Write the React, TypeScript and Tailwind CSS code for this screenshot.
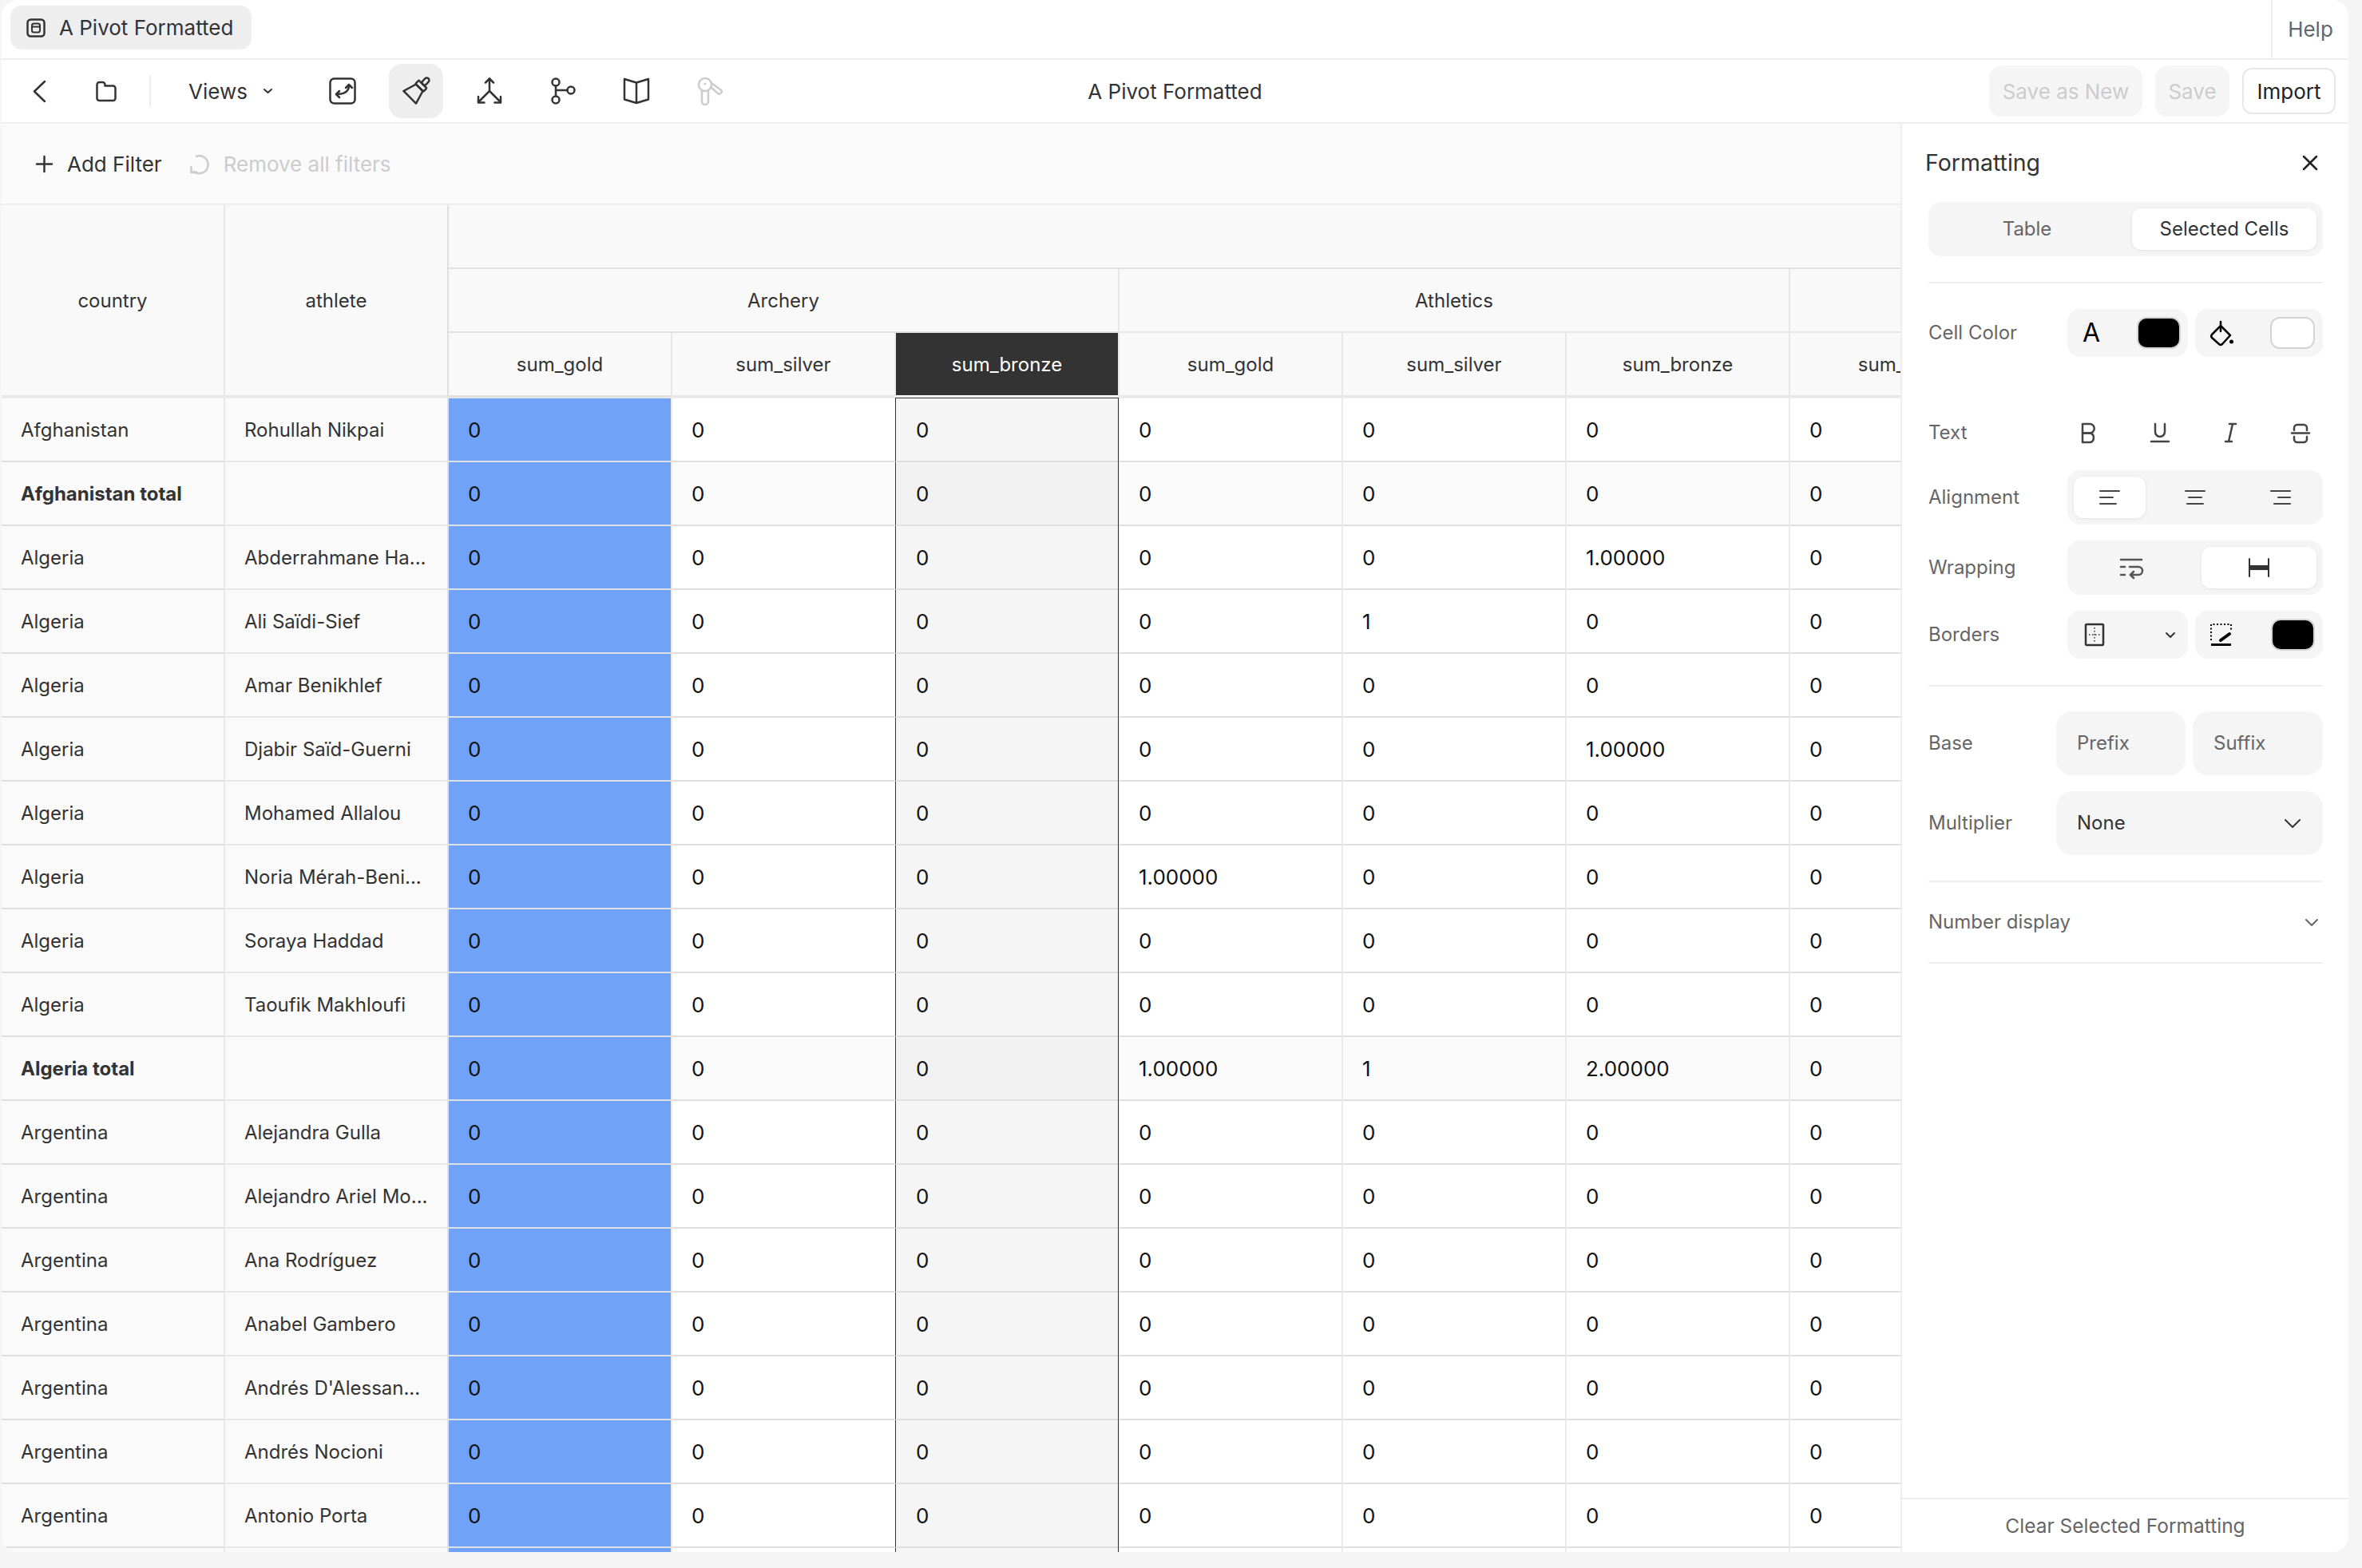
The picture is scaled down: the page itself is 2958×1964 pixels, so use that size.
import React from 'react';

type IconProps = { w: number; h: number; box?: string; sw?: number; className?: string; children: React.ReactNode };

const Ico = ({ w, h, box, sw = 2.5, className = '', children }: IconProps) => (
  <svg
    width={w}
    height={h}
    viewBox={box ?? `0 0 ${w} ${h}`}
    fill="none"
    stroke="currentColor"
    strokeWidth={sw}
    strokeLinecap="round"
    strokeLinejoin="round"
    className={`shrink-0 overflow-visible ${className}`}
  >
    {children}
  </svg>
);

const Chevron = ({ w = 16, h = 9, sw = 2 }: { w?: number; h?: number; sw?: number }) => (
  <Ico w={w} h={h} sw={sw}>
    <path d={`M1 1 L${w / 2} ${h - 1} L${w - 1} 1`} />
  </Ico>
);

const COLS = ['sum_gold', 'sum_silver', 'sum_bronze', 'sum_gold', 'sum_silver', 'sum_bronze', 'sum_gold'];

type Row = { country: string; athlete: string; total?: boolean; blank?: boolean; vals?: Record<number, string> };

const ROWS: Row[] = [
  { country: 'Afghanistan', athlete: 'Rohullah Nikpai' },
  { country: 'Afghanistan total', athlete: '', total: true },
  { country: 'Algeria', athlete: 'Abderrahmane Ha...', vals: { 5: '1.00000' } },
  { country: 'Algeria', athlete: 'Ali Saïdi-Sief', vals: { 4: '1' } },
  { country: 'Algeria', athlete: 'Amar Benikhlef' },
  { country: 'Algeria', athlete: 'Djabir Saïd-Guerni', vals: { 5: '1.00000' } },
  { country: 'Algeria', athlete: 'Mohamed Allalou' },
  { country: 'Algeria', athlete: 'Noria Mérah-Beni...', vals: { 3: '1.00000' } },
  { country: 'Algeria', athlete: 'Soraya Haddad' },
  { country: 'Algeria', athlete: 'Taoufik Makhloufi' },
  { country: 'Algeria total', athlete: '', total: true, vals: { 3: '1.00000', 4: '1', 5: '2.00000' } },
  { country: 'Argentina', athlete: 'Alejandra Gulla' },
  { country: 'Argentina', athlete: 'Alejandro Ariel Mo...' },
  { country: 'Argentina', athlete: 'Ana Rodríguez' },
  { country: 'Argentina', athlete: 'Anabel Gambero' },
  { country: 'Argentina', athlete: "Andrés D'Alessan..." },
  { country: 'Argentina', athlete: 'Andrés Nocioni' },
  { country: 'Argentina', athlete: 'Antonio Porta' },
  { country: '', athlete: '', blank: true },
];

const PivotTable = () => (
  <div className="min-h-0 flex-1 overflow-hidden text-[24px]">
    <div className="grid h-[241px] w-[2798px] grid-cols-[278px_280px_repeat(8,280px)] grid-rows-[80px_80px_81px] bg-[#f9f9f9] text-[#333]">
      <div className="row-span-3 flex items-center justify-center border-b-[3px] border-[#e8e8e8] pt-[2px]">country</div>
      <div className="row-span-3 flex items-center justify-center border-b-[3px] border-l-2 border-[#e8e8e8] pt-[2px]">athlete</div>
      <div className="col-span-8 border-b-2 border-l-2 border-[#e0e0e0]" />
      <div className="col-span-3 flex items-center justify-center border-b-2 border-l-2 border-[#e0e0e0] pt-[2px]">Archery</div>
      <div className="col-span-3 flex items-center justify-center border-b-2 border-l-2 border-[#e8e8e8] pt-[2px]">Athletics</div>
      <div className="col-span-2 border-b-2 border-l-2 border-[#e8e8e8]" />
      {COLS.map((c, i) =>
        i === 2 ? (
          <div key={i} className="mb-[3px] flex items-center justify-center border-l-2 border-[#eee] bg-[#333] pt-[2px] text-white">
            {c}
          </div>
        ) : (
          <div key={i} className={`flex items-center justify-center border-b-[3px] border-l-2 pt-[2px] ${i === 0 ? 'border-[#e0e0e0]' : 'border-[#e8e8e8]'}`}>
            {c}
          </div>
        )
      )}
      <div className="border-b-[3px] border-l-2 border-[#e8e8e8]" />
    </div>
    {ROWS.map((r, ri) => (
      <div key={ri} className={`flex w-[2798px] border-[#eee] ${ri === 0 ? 'h-[81px] border-t' : 'h-[80px]'}`}>
        <div className={`flex w-[278px] items-center border-b-2 border-[#e0e0e0] bg-[#fafafa] pl-6 pt-[2px] text-[#333] ${r.total ? 'font-bold' : ''}`}>
          {r.country}
        </div>
        <div className="flex w-[280px] items-center border-b-2 border-l-2 border-[#e8e8e8] bg-[#fafafa] pl-6 pt-[2px] text-[#333]">
          {r.athlete}
        </div>
        {COLS.map((_, i) => {
          const value = r.blank ? '' : r.vals?.[i] ?? '0';
          let tone = r.total ? 'bg-[#fafafa]' : 'bg-white';
          if (i === 0) tone = 'bg-[#70a3f7]';
          return i === 2 ? (
            <div
              key={i}
              className={`relative z-10 ml-px flex w-[279px] items-center border-b-2 border-l border-b-[#e0e0e0] border-l-[#333] pl-[25px] text-[26px] text-[#111] shadow-[1px_0_0_#333] ${
                ri === 0 ? '-mt-px border-t border-t-[#333]' : ''
              } ${r.total ? 'bg-[#f1f1f1]' : 'bg-[#f5f5f5]'}`}
            >
              {value}
            </div>
          ) : (
            <div
              key={i}
              className={`flex w-[280px] items-center border-b-2 border-l-2 border-b-[#e0e0e0] pl-6 text-[26px] text-[#111] ${
                i === 0 ? 'border-l-[#e0e0e0]' : 'border-l-[#eaeaea]'
              } ${tone}`}
            >
              {value}
            </div>
          );
        })}
        <div className="w-[280px] border-b-2 border-l-2 border-b-[#e0e0e0] border-l-[#eaeaea] bg-white" />
      </div>
    ))}
  </div>
);

const FormatRow = ({ label, className = '', children }: { label: string; className?: string; children: React.ReactNode }) => (
  <div className={`flex items-center justify-between ${className}`}>
    <span className="text-[#666]">{label}</span>
    {children}
  </div>
);

const Swatch = ({ black }: { black?: boolean }) => (
  <div className={`rounded-xl border-2 border-[#d4d4d4] ${black ? 'h-[40px] w-[55px] bg-black' : 'h-[40px] w-[56px] bg-white'}`} />
);

const FormattingPanel = () => (
  <aside className="flex w-[561px] shrink-0 flex-col border-l-2 border-[#eee] bg-white text-[24px]">
    <div className="flex h-[98px] shrink-0 items-center justify-between pl-[29px] pr-[39px] text-[28.5px] text-[#333]">
      <span>Formatting</span>
      <Ico w={18} h={18} sw={2.5} className="text-[#222]">
        <path d="M1 1 L17 17 M17 1 L1 17" />
      </Ico>
    </div>
    <div className="mx-[33px] mr-[32px] flex flex-col">
      <div className="grid h-[68px] grid-cols-2 gap-4 rounded-2xl bg-[#f5f5f5] p-2">
        <div className="flex items-center justify-center text-[#666]">Table</div>
        <div className="flex items-center justify-center rounded-xl bg-white text-[#333] shadow-[0_1px_4px_rgba(0,0,0,0.08)]">Selected Cells</div>
      </div>
      <div className="mt-8 border-t-2 border-[#eee]" />

      <FormatRow label="Cell Color" className="mt-8 h-[60px]">
        <div className="flex gap-[9px]">
          <div className="flex h-[60px] w-[151px] items-center justify-between rounded-2xl bg-[#f5f5f5] pl-[19px] pr-[9px]">
            <span className="text-[32px] leading-none text-black">A</span>
            <Swatch black />
          </div>
          <div className="flex h-[60px] w-[160px] items-center justify-between rounded-2xl bg-[#f5f5f5] pl-[19px] pr-[10px]">
            <Ico w={29} h={31} className="text-black">
              <path d="M13 6 L25 18 L15 29 a3 3 0 0 1 -4 0 L2 21 a3 3 0 0 1 0-4 Z" />
              <path d="M13 1 V13" />
              <circle cx="26.5" cy="26" r="2.5" fill="currentColor" stroke="none" />
            </Ico>
            <Swatch />
          </div>
        </div>
      </FormatRow>

      <FormatRow label="Text" className="mt-[67px] h-[56px]">
        <div className="flex w-[320px] items-center justify-between pl-[17px] pr-[16px] text-[#444]">
          <Ico w={19} h={25}>
            <path d="M2 1 H11 a5.5 5.5 0 0 1 0 11.5 H2 Z" />
            <path d="M2 12.5 H12 a5.5 6 0 0 1 0 11.5 H2 Z" />
          </Ico>
          <Ico w={24} h={24}>
            <path d="M6 1 V11 a6 6 0 0 0 12 0 V1" />
            <path d="M1 23 H23" />
          </Ico>
          <Ico w={15} h={24}>
            <path d="M6 1 H14 M1 23 H9 M10 1 L5 23" />
          </Ico>
          <Ico w={24} h={25}>
            <path d="M4 9 V6 a4 4 0 0 1 4-4 h8 a4 4 0 0 1 4 4 v3" />
            <path d="M1 12.5 H23" />
            <path d="M4 17 v3 a4 4 0 0 0 4 4 h8 a4 4 0 0 0 4-4 v-3" />
          </Ico>
        </div>
      </FormatRow>

      <FormatRow label="Alignment" className="mt-[19px] h-[68px]">
        <div className="grid h-[68px] w-[320px] grid-cols-3 gap-[17px] rounded-2xl bg-[#f5f5f5] p-2 text-[#444]">
          <div className="flex items-center justify-center rounded-xl bg-white shadow-[0_1px_4px_rgba(0,0,0,0.08)]">
            <Ico w={26} h={20} sw={2}>
              <path d="M1 2 H25 M1 10 H17 M1 18 H21" />
            </Ico>
          </div>
          <div className="flex items-center justify-center">
            <Ico w={26} h={20} sw={2}>
              <path d="M1 2 H25 M5 10 H21 M3 18 H23" />
            </Ico>
          </div>
          <div className="flex items-center justify-center">
            <Ico w={26} h={20} sw={2}>
              <path d="M1 2 H25 M10 10 H25 M5 18 H25" />
            </Ico>
          </div>
        </div>
      </FormatRow>

      <FormatRow label="Wrapping" className="mt-5 h-[68px]">
        <div className="grid h-[68px] w-[320px] grid-cols-2 gap-4 rounded-2xl bg-[#f5f5f5] p-2 text-[#555]">
          <div className="flex items-center justify-center">
            <Ico w={28} h={24}>
              <path d="M1 2 H27 M1 11 H6 M1 21 H6" />
              <path d="M12 11 H23 a4 4 0 0 1 0 10 H13" />
              <path d="M17 17 L13 21 L17 25" />
            </Ico>
          </div>
          <div className="flex items-center justify-center rounded-xl bg-white shadow-[0_1px_4px_rgba(0,0,0,0.08)]">
            <Ico w={26} h={24} sw={2} className="text-[#333]">
              <path d="M1 1 V23 M25 1 V23" />
              <path d="M2 12 H24" strokeWidth={6} strokeLinecap="butt" />
            </Ico>
          </div>
        </div>
      </FormatRow>

      <FormatRow label="Borders" className="mt-5 h-[60px]">
        <div className="flex gap-[9px]">
          <div className="flex h-[60px] w-[151px] items-center justify-between rounded-2xl bg-[#f5f5f5] pl-[22px] pr-[16px] text-[#333]">
            <Ico w={24} h={28}>
              <rect x="1" y="1" width="22" height="26" rx="1" />
              <path d="M12 5 V23 M5 14 H19" strokeWidth={1.5} strokeDasharray="1.5 2.5" strokeLinecap="butt" />
            </Ico>
            <Chevron w={12} h={7} />
          </div>
          <div className="flex h-[60px] w-[160px] items-center justify-between rounded-2xl bg-[#f5f5f5] pl-[19px] pr-[10px] text-black">
            <Ico w={27} h={28}>
              <path d="M1 26.5 H26" strokeWidth={3} strokeLinecap="butt" />
              <path d="M1 21 V1 H26 V9" strokeWidth={2} strokeDasharray="2 2.5" strokeLinecap="butt" />
              <path d="M13 21 L24 13" strokeWidth={4} />
            </Ico>
            <Swatch black />
          </div>
        </div>
      </FormatRow>

      <div className="mt-[33px] border-t-2 border-[#eee]" />

      <FormatRow label="Base" className="mt-[31px] h-[80px]">
        <div className="flex gap-[9px] text-[#666]">
          <div className="flex h-[80px] w-[162px] items-center rounded-[20px] bg-[#f5f5f5] pl-[26px]">Prefix</div>
          <div className="flex h-[80px] w-[163px] items-center rounded-[20px] bg-[#f5f5f5] pl-[26px]">Suffix</div>
        </div>
      </FormatRow>

      <FormatRow label="Multiplier" className="mt-5 h-[80px]">
        <div className="flex h-[80px] w-[334px] items-center justify-between rounded-[20px] bg-[#f5f5f5] pl-[26px] pr-[28px] text-[#333]">
          <span>None</span>
          <Chevron w={20} h={11} />
        </div>
      </FormatRow>

      <div className="mt-[32px] border-t-2 border-[#eee]" />
      <div className="flex h-[100px] items-center justify-between pr-[6px] text-[#666]">
        <span>Number display</span>
        <Chevron w={16} h={9} />
      </div>
      <div className="border-t-2 border-[#eee]" />
    </div>
    <div className="mt-auto flex h-[68px] shrink-0 items-center justify-center border-t-2 border-[#eee] text-[24.5px] text-[#666]">
      Clear Selected Formatting
    </div>
  </aside>
);

export default function App() {
  return (
    <div className="h-[1964px] w-[2958px] overflow-hidden bg-[#f5f5f5] pl-[2px] font-[Inter,sans-serif]">
      <div className="flex h-[1944px] w-[2939px] flex-col overflow-hidden rounded-[20px] bg-white">
        {/* tab strip */}
        <div className="flex h-[75px] shrink-0 items-start justify-between border-b-2 border-[#eee]">
          <div className="ml-[11px] mt-[7px] flex h-[55px] w-[302px] items-center gap-[17px] rounded-[14px] bg-[#eee] pl-5 text-[26px] text-[#333]">
            <Ico w={24} h={24} box="0 0 24 24" className="text-[#333]">
              <rect x="1.5" y="1.5" width="21" height="21" rx="4" />
              <rect x="7" y="6.5" width="10" height="11" rx="2.5" strokeWidth={2} />
              <path d="M7 10.5 H17" strokeWidth={2} />
            </Ico>
            A Pivot Formatted
          </div>
          <div className="flex h-full w-[97px] items-center justify-center border-l-2 border-[#eee] text-[26px] text-[#666]">Help</div>
        </div>

        {/* toolbar */}
        <div className="grid h-[80px] shrink-0 grid-cols-[1fr_auto_1fr] items-center border-b-2 border-[#eee] text-[26px] text-[#333]">
          <div className="flex items-center">
            <Ico w={15} h={27} className="ml-[40px]">
              <path d="M14 1 L1 13.5 L14 26" />
            </Ico>
            <Ico w={26} h={26} className="ml-[63px]">
              <path d="M1.5 9 V5 a3 3 0 0 1 3-3 h4 a3 3 0 0 1 3 3 v1.5 h10 a3 3 0 0 1 3 3 V22 a3 3 0 0 1-3 3 h-17 a3 3 0 0 1-3-3 Z" />
            </Ico>
            <div className="ml-[41px] h-[40px] w-[2px] bg-[#eee]" />
            <div className="ml-[47px] flex w-[159px] items-center gap-[20px]">
              Views
              <Chevron w={11} h={6} />
            </div>
            <div className="flex items-center gap-6">
              <button className="flex h-[68px] w-[68px] items-center justify-center rounded-2xl">
                <Ico w={34} h={34}>
                  <rect x="1.5" y="1.5" width="31" height="31" rx="5" />
                  <path d="M25 10 C25 17 20 21 9 21" />
                  <path d="M21 13 L25 9 L29 13 M13 17 L9 21 L13 25" />
                </Ico>
              </button>
              <button className="flex h-[68px] w-[68px] items-center justify-center rounded-2xl bg-[#eee]">
                <Ico w={32} h={32}>
                  <g transform="rotate(45 16 16)">
                    <rect x="13" y="-6" width="6" height="10" rx="3" />
                    <rect x="9" y="4" width="14" height="6" rx="1" />
                    <path d="M10 10 H22 L27 27 H5 Z" />
                  </g>
                </Ico>
              </button>
              <button className="flex h-[68px] w-[68px] items-center justify-center rounded-2xl">
                <Ico w={34} h={34}>
                  <path d="M17 1.5 V17 M17 17 L3 31 M17 17 L31 31" />
                  <path d="M12 6.5 L17 1.5 L22 6.5 M3 24 V31.5 H10.5 M31 24 V31.5 H23.5" />
                </Ico>
              </button>
              <button className="flex h-[68px] w-[68px] items-center justify-center rounded-2xl">
                <Ico w={30} h={34}>
                  <circle cx="6" cy="6" r="4.5" />
                  <circle cx="6" cy="28" r="4.5" />
                  <circle cx="25" cy="16" r="4.5" />
                  <path d="M6 10.5 V23.5 M6 16 H20.5" />
                </Ico>
              </button>
              <button className="flex h-[68px] w-[68px] items-center justify-center rounded-2xl">
                <Ico w={34} h={34}>
                  <path d="M17 6.5 L2 2 V27.5 L17 32 L32 27.5 V2 Z M17 6.5 V32" />
                </Ico>
              </button>
              <button className="flex h-[68px] w-[68px] items-center justify-center rounded-2xl text-[#ccc]">
                <Ico w={32} h={36}>
                  <circle cx="10" cy="10" r="8" />
                  <circle cx="10" cy="9" r="1.5" fill="currentColor" stroke="none" />
                  <path d="M6 17 V31 a4 4 0 0 0 8 0 V18" />
                  <path d="M17 13 L26 21 a2.8 2.8 0 0 0 3.5-4.5 L18 8" />
                </Ico>
              </button>
            </div>
          </div>
          <div className="text-[#333]">A Pivot Formatted</div>
          <div className="flex items-center justify-end gap-4 pr-4">
            <div className="flex h-[64px] w-[192px] items-center justify-center rounded-2xl bg-[#f5f5f5] text-[#ccc]">Save as New</div>
            <div className="flex h-[64px] w-[93px] items-center justify-center rounded-2xl bg-[#f5f5f5] text-[#ccc]">Save</div>
            <div className="flex h-[58px] w-[117px] items-center justify-center rounded-xl border-2 border-[#e8e8e8] text-[#222]">Import</div>
          </div>
        </div>

        <div className="flex min-h-0 flex-1">
          <div className="flex min-w-0 flex-1 flex-col">
            {/* filter bar */}
            <div className="flex h-[102px] shrink-0 items-center border-b-2 border-[#eee] bg-[#fafafa] text-[26px]">
              <Ico w={21} h={21} className="ml-[43px] text-[#333]">
                <path d="M10.5 1 V20 M1 10.5 H20" />
              </Ico>
              <span className="ml-[18px] text-[#333]">Add Filter</span>
              <Ico w={25} h={25} className="ml-[35px] text-[#ccc]">
                <path d="M8 2.8 A11 11 0 1 1 5 22" />
                <path d="M1.5 16 V23 H8.5" />
              </Ico>
              <span className="ml-[17px] text-[#ccc]">Remove all filters</span>
            </div>
            <PivotTable />
          </div>
          <FormattingPanel />
        </div>
      </div>
    </div>
  );
}
